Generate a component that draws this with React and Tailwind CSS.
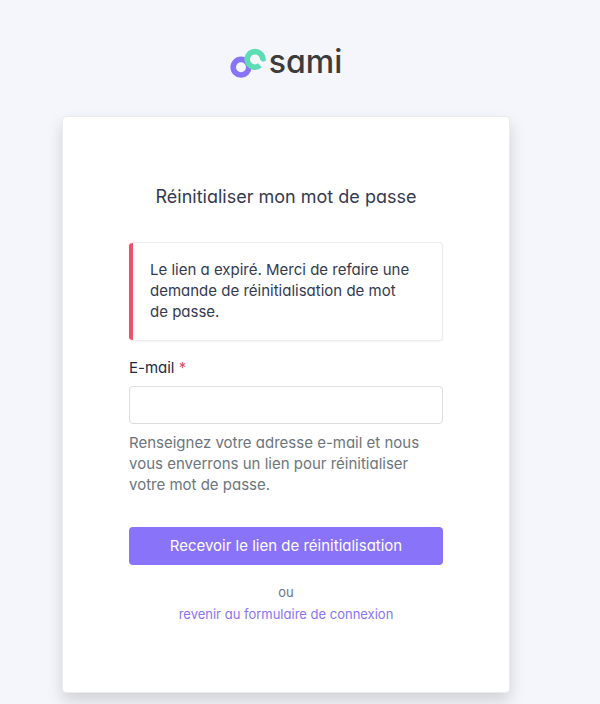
function Logo() {
  return (
    <div className="flex items-start gap-[3px]">
      <svg width="36" height="30" viewBox="0 0 36 30" fill="none" aria-hidden="true">
        <circle cx="11" cy="19.2" r="7.8" stroke="#8973f8" strokeWidth="5.6" />
        <path
          d="M30 17.4A7.8 7.8 0 1 1 32.8 12"
          stroke="#5edcb4"
          strokeWidth="5.6"
        />
        <path d="M30 11.4L32.6 13.8L35.6 13L35.6 10.4L30 10.4Z" fill="#5edcb4" />
      </svg>
      <span className="text-[32px] leading-7 font-medium text-[#3c3c3b]">sami</span>
    </div>
  );
}

function Alert({ children }) {
  return (
    <div
      role="alert"
      className="flex overflow-hidden rounded border border-l-0 border-[#ececef] bg-white shadow-xs"
    >
      <div className="w-1 shrink-0 bg-[#ef5266]" />
      <p className="pt-4 pr-8 pb-[18px] pl-[17px] leading-[21px] text-[#343a4f]">{children}</p>
    </div>
  );
}

export default function App() {
  return (
    <div className="min-h-screen bg-[#f5f6fb] pt-12 pr-7 font-['Inter',sans-serif] text-[15px] [font-feature-settings:'cv11']">
      <main className="mx-auto flex max-w-md flex-col items-center">
        <Logo />

        <form
          onSubmit={(e) => e.preventDefault()}
          className="mt-[38px] w-full rounded border border-[#ebebee] bg-white px-[66px] py-[67px] shadow-[0_8px_16px_rgba(0,0,0,0.15)]"
        >
          <h1 className="mb-8 text-center text-lg leading-[26px] text-[#343a4f]">
            Réinitialiser mon mot de passe
          </h1>

          <Alert>
            Le lien a expiré. Merci de refaire une demande de réinitialisation
            de mot de passe.
          </Alert>

          <label htmlFor="email" className="mt-4 mb-2 block leading-[21px] text-[#212a3c]">
            E-mail <span className="text-[#dc4c5c]">*</span>
          </label>
          <input
            id="email"
            type="email"
            required
            aria-describedby="email-help"
            className="block h-[38px] w-full rounded border border-[#dcdde1] bg-white px-3 outline-none"
          />
          <p id="email-help" className="mt-2 leading-[21px] text-[#6c757d]">
            Renseignez votre adresse e-mail et nous vous enverrons un lien pour
            réinitialiser votre mot de passe.
          </p>

          <button
            type="submit"
            className="mt-8 block h-[38px] w-full rounded bg-[#8973f8] text-white"
          >
            Recevoir le lien de réinitialisation
          </button>

          <div className="mt-4 text-center text-[13px] leading-[22px] text-[#6c757d]">
            <p>ou</p>
            <a href="#connexion" className="text-[#8973f8]">
              revenir au formulaire de connexion
            </a>
          </div>
        </form>
      </main>
    </div>
  );
}
